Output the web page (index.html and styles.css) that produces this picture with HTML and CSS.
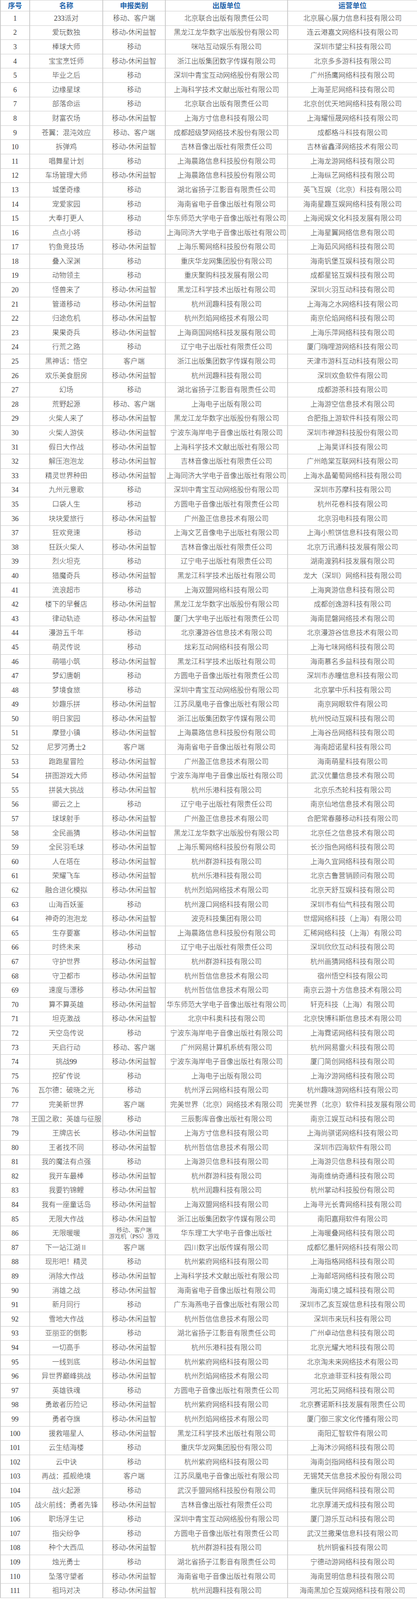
FILE: index.html
```html
<!DOCTYPE html>
<html lang="zh-CN">
<head>
<meta charset="utf-8">
<title>游戏审批名单</title>
<link rel="stylesheet" href="styles.css">
</head>
<body>
<table class="list">
<colgroup>
<col class="c-no"><col class="c-name"><col class="c-type"><col class="c-pub"><col class="c-op">
</colgroup>
<thead>
<tr><th>序号</th><th>名称</th><th>申报类别</th><th>出版单位</th><th>运营单位</th></tr>
</thead>
<tbody>
<tr><td>1</td><td>233派对</td><td>移动、客户端</td><td>北京联合出版有限责任公司</td><td>北京展心展力信息科技有限公司</td></tr>
<tr><td>2</td><td>爱玩数独</td><td>移动-休闲益智</td><td>黑龙江龙华数字出版股份有限公司</td><td>连云港嘉文网络科技有限公司</td></tr>
<tr><td>3</td><td>棒球大师</td><td>移动</td><td>咪咕互动娱乐有限公司</td><td>深圳市望尘科技有限公司</td></tr>
<tr><td>4</td><td>宝宝烹饪师</td><td>移动-休闲益智</td><td>浙江出版集团数字传媒有限公司</td><td>北京多多游科技有限公司</td></tr>
<tr><td>5</td><td>毕业之后</td><td>移动</td><td>深圳中青宝互动网络股份有限公司</td><td>广州扬鹰网络科技有限公司</td></tr>
<tr><td>6</td><td>边缘星球</td><td>移动</td><td>上海科学技术文献出版社有限公司</td><td>上海荃尼网络科技有限公司</td></tr>
<tr><td>7</td><td>部落命运</td><td>移动</td><td>北京联合出版有限责任公司</td><td>北京创优天地网络科技有限公司</td></tr>
<tr><td>8</td><td>财富农场</td><td>移动-休闲益智</td><td>上海方寸信息科技有限公司</td><td>上海耀恒晟网络科技有限公司</td></tr>
<tr><td>9</td><td>苍翼：混沌效应</td><td>移动、客户端</td><td>成都超级梦网络技术股份有限公司</td><td>成都格斗科技有限公司</td></tr>
<tr><td>10</td><td>拆弹鸡</td><td>移动-休闲益智</td><td>吉林音像出版社有限责任公司</td><td>吉林省鑫泽网络技术有限公司</td></tr>
<tr><td>11</td><td>唱舞星计划</td><td>移动</td><td>上海晨路信息科技股份有限公司</td><td>上海龙游网络科技有限公司</td></tr>
<tr><td>12</td><td>车场管理大师</td><td>移动-休闲益智</td><td>上海晨路信息科技股份有限公司</td><td>上海纵艺网络科技有限公司</td></tr>
<tr><td>13</td><td>城堡奇缘</td><td>移动</td><td>湖北省扬子江影音有限责任公司</td><td>英飞互娱（北京）科技有限公司</td></tr>
<tr><td>14</td><td>宠爱家园</td><td>移动</td><td>海南省电子音像出版社有限公司</td><td>海南星趣互娱网络科技有限公司</td></tr>
<tr><td>15</td><td>大奉打更人</td><td>移动</td><td>华东师范大学电子音像出版社有限公司</td><td>上海阅娱文化科技发展有限公司</td></tr>
<tr><td>16</td><td>点点小将</td><td>移动</td><td>上海同济大学电子音像出版社有限公司</td><td>上海星翼网络信息有限公司</td></tr>
<tr><td>17</td><td>钓鱼竞技场</td><td>移动-休闲益智</td><td>上海乐蜀网络科技股份有限公司</td><td>上海茹风网络科技有限公司</td></tr>
<tr><td>18</td><td>叠入深渊</td><td>移动</td><td>重庆华龙网集团股份有限公司</td><td>海南钒堡互娱科技有限公司</td></tr>
<tr><td>19</td><td>动物领主</td><td>移动</td><td>重庆聚购科技发展有限公司</td><td>成都星铭互娱科技有限公司</td></tr>
<tr><td>20</td><td>怪兽来了</td><td>移动-休闲益智</td><td>黑龙江科学技术出版社有限公司</td><td>深圳火羽互动科技有限公司</td></tr>
<tr><td>21</td><td>管道移动</td><td>移动-休闲益智</td><td>杭州润趣科技有限公司</td><td>上海海之水网络科技有限公司</td></tr>
<tr><td>22</td><td>归途危机</td><td>移动-休闲益智</td><td>杭州烈焰网络技术有限公司</td><td>南京伦焰网络科技有限公司</td></tr>
<tr><td>23</td><td>果果奇兵</td><td>移动-休闲益智</td><td>上海商国网络科技发展有限公司</td><td>上海乐萍网络科技有限公司</td></tr>
<tr><td>24</td><td>行荒之路</td><td>移动</td><td>辽宁电子出版社有限责任公司</td><td>厦门嗨哩游网络科技有限公司</td></tr>
<tr><td>25</td><td>黑神话：悟空</td><td>客户端</td><td>浙江出版集团数字传媒有限公司</td><td>天津市游科互动科技有限公司</td></tr>
<tr><td>26</td><td>欢乐美食厨房</td><td>移动-休闲益智</td><td>杭州润趣科技有限公司</td><td>深圳欢鱼软件有限公司</td></tr>
<tr><td>27</td><td>幻场</td><td>移动</td><td>湖北省扬子江影音有限责任公司</td><td>成都游茶科技有限公司</td></tr>
<tr><td>28</td><td>荒野起源</td><td>移动、客户端</td><td>上海电子出版有限公司</td><td>上海游空信息技术有限公司</td></tr>
<tr><td>29</td><td>火柴人来了</td><td>移动-休闲益智</td><td>黑龙江龙华数字出版股份有限公司</td><td>合肥指上游软件科技有限公司</td></tr>
<tr><td>30</td><td>火柴人游侠</td><td>移动-休闲益智</td><td>宁波东海岸电子音像出版社有限公司</td><td>深圳市禅游科技股份有限公司</td></tr>
<tr><td>31</td><td>假日大作战</td><td>移动-休闲益智</td><td>上海科学技术文献出版社有限公司</td><td>上海昊详科技有限公司</td></tr>
<tr><td>32</td><td>解压泡泡龙</td><td>移动-休闲益智</td><td>吉林音像出版社有限责任公司</td><td>广州皓棠互联网科技有限公司</td></tr>
<tr><td>33</td><td>精灵世界种田</td><td>移动-休闲益智</td><td>上海同济大学电子音像出版社有限公司</td><td>上海水晶葡萄网络科技有限公司</td></tr>
<tr><td>34</td><td>九州元意歌</td><td>移动</td><td>深圳中青宝互动网络股份有限公司</td><td>深圳市苏摩科技有限公司</td></tr>
<tr><td>35</td><td>口袋人生</td><td>移动</td><td>方圆电子音像出版社有限责任公司</td><td>杭州花卷科技有限公司</td></tr>
<tr><td>36</td><td>块块爱旅行</td><td>移动-休闲益智</td><td>广州盈正信息技术有限公司</td><td>北京羽电科技有限公司</td></tr>
<tr><td>37</td><td>狂欢竞速</td><td>移动</td><td>上海文艺音像电子出版社有限公司</td><td>上海小煎饼信息科技有限公司</td></tr>
<tr><td>38</td><td>狂跃火柴人</td><td>移动-休闲益智</td><td>吉林音像出版社有限责任公司</td><td>北京万讯通科技发展有限公司</td></tr>
<tr><td>39</td><td>烈火坦克</td><td>移动</td><td>辽宁电子出版社有限责任公司</td><td>湖南渡鸦科技发展有限公司</td></tr>
<tr><td>40</td><td>猎魔奇兵</td><td>移动-休闲益智</td><td>黑龙江科学技术出版社有限公司</td><td>龙大（深圳）网络科技有限公司</td></tr>
<tr><td>41</td><td>流浪超市</td><td>移动</td><td>上海双盟网络科技有限公司</td><td>上海爽游信息科技有限公司</td></tr>
<tr><td>42</td><td>楼下的早餐店</td><td>移动-休闲益智</td><td>黑龙江龙华数字出版股份有限公司</td><td>成都创逸游科技有限公司</td></tr>
<tr><td>43</td><td>律动轨迹</td><td>移动-休闲益智</td><td>厦门大学电子出版社有限责任公司</td><td>海南昆磐网络技术有限公司</td></tr>
<tr><td>44</td><td>漫游五千年</td><td>移动</td><td>北京漫游谷信息技术有限公司</td><td>北京漫游谷信息技术有限公司</td></tr>
<tr><td>45</td><td>萌灵传说</td><td>移动</td><td>炫彩互动网络科技有限公司</td><td>上海七味网络科技有限公司</td></tr>
<tr><td>46</td><td>萌喵小筑</td><td>移动-休闲益智</td><td>黑龙江科学技术出版社有限公司</td><td>海南慕名多益科技有限公司</td></tr>
<tr><td>47</td><td>梦幻唐朝</td><td>移动</td><td>方圆电子音像出版社有限责任公司</td><td>深圳市赤瞳信息科技有限公司</td></tr>
<tr><td>48</td><td>梦境食旅</td><td>移动</td><td>深圳中青宝互动网络股份有限公司</td><td>北京掌中乐科技有限公司</td></tr>
<tr><td>49</td><td>妙趣乐拼</td><td>移动-休闲益智</td><td>江苏凤凰电子音像出版社有限公司</td><td>南京网眼软件有限公司</td></tr>
<tr><td>50</td><td>明日家园</td><td>移动-休闲益智</td><td>浙江出版集团数字传媒有限公司</td><td>杭州悦动互娱科技有限公司</td></tr>
<tr><td>51</td><td>摩登小镇</td><td>移动-休闲益智</td><td>上海晨路信息科技股份有限公司</td><td>上海谷岳网络科技有限公司</td></tr>
<tr><td>52</td><td>尼罗河勇士2</td><td>客户端</td><td>海南省电子音像出版社有限公司</td><td>海南超诺星科技有限公司</td></tr>
<tr><td>53</td><td>跑跑星冒险</td><td>移动-休闲益智</td><td>广州盈正信息技术有限公司</td><td>海南萌星科技有限公司</td></tr>
<tr><td>54</td><td>拼图游戏大师</td><td>移动-休闲益智</td><td>宁波东海岸电子音像出版社有限公司</td><td>武汉优量信息技术有限公司</td></tr>
<tr><td>55</td><td>拼装大挑战</td><td>移动-休闲益智</td><td>杭州乐港科技有限公司</td><td>北京乐杰轮科技有限公司</td></tr>
<tr><td>56</td><td>卿云之上</td><td>移动</td><td>辽宁电子出版社有限责任公司</td><td>南京仙地信息技术有限公司</td></tr>
<tr><td>57</td><td>球球射手</td><td>移动-休闲益智</td><td>广州盈正信息技术有限公司</td><td>合肥常春藤移动科技有限公司</td></tr>
<tr><td>58</td><td>全民画猜</td><td>移动-休闲益智</td><td>黑龙江龙华数字出版股份有限公司</td><td>北京任之信息技术有限公司</td></tr>
<tr><td>59</td><td>全民羽毛球</td><td>移动-休闲益智</td><td>上海乐蜀网络科技股份有限公司</td><td>长沙指色网络科技有限公司</td></tr>
<tr><td>60</td><td>人在塔在</td><td>移动-休闲益智</td><td>杭州群游科技有限公司</td><td>上海久宜网络科技有限公司</td></tr>
<tr><td>61</td><td>荣耀飞车</td><td>移动-休闲益智</td><td>杭州乐港科技有限公司</td><td>北京古鲁营销顾问有限公司</td></tr>
<tr><td>62</td><td>融合进化模拟</td><td>移动-休闲益智</td><td>杭州烈焰网络技术有限公司</td><td>北京天舒互娱科技有限公司</td></tr>
<tr><td>63</td><td>山海百妖鉴</td><td>移动</td><td>杭州渡口网络科技有限公司</td><td>深圳市有仙气科技有限公司</td></tr>
<tr><td>64</td><td>神奇的泡泡龙</td><td>移动-休闲益智</td><td>波克科技集团有限公司</td><td>世熠网络科技（上海）有限公司</td></tr>
<tr><td>65</td><td>生存要塞</td><td>移动-休闲益智</td><td>上海晨路信息科技股份有限公司</td><td>汇稀网络科技（上海）有限公司</td></tr>
<tr><td>66</td><td>时终未来</td><td>移动</td><td>辽宁电子出版社有限责任公司</td><td>深圳欣欣互动科技有限公司</td></tr>
<tr><td>67</td><td>守护世界</td><td>移动-休闲益智</td><td>杭州群游科技有限公司</td><td>杭州画猜网络科技有限公司</td></tr>
<tr><td>68</td><td>守卫都市</td><td>移动-休闲益智</td><td>杭州哲信信息技术有限公司</td><td>宿州悟空科技有限公司</td></tr>
<tr><td>69</td><td>速度与漂移</td><td>移动-休闲益智</td><td>杭州哲信信息技术有限公司</td><td>南京云游十方信息技术有限公司</td></tr>
<tr><td>70</td><td>算不算英雄</td><td>移动-休闲益智</td><td>华东师范大学电子音像出版社有限公司</td><td>轩克科技（上海）有限公司</td></tr>
<tr><td>71</td><td>坦克激战</td><td>移动-休闲益智</td><td>北京中科奥科技有限公司</td><td>北京快博科斯信息技术有限公司</td></tr>
<tr><td>72</td><td>天空岛传说</td><td>移动</td><td>宁波东海岸电子音像出版社有限公司</td><td>上海霓诺网络科技有限公司</td></tr>
<tr><td>73</td><td>天启行动</td><td>移动、客户端</td><td>广州网易计算机系统有限公司</td><td>杭州网易雷火科技有限公司</td></tr>
<tr><td>74</td><td>挑战99</td><td>移动-休闲益智</td><td>宁波东海岸电子音像出版社有限公司</td><td>厦门简创网络科技有限公司</td></tr>
<tr><td>75</td><td>挖矿传说</td><td>移动</td><td>上海电子出版有限公司</td><td>上海汐游网络科技有限公司</td></tr>
<tr><td>76</td><td>瓦尔德：破晓之光</td><td>移动</td><td>杭州浮云网络科技有限公司</td><td>杭州趣味游网络科技有限公司</td></tr>
<tr><td>77</td><td>完美新世界</td><td>客户端</td><td>完美世界（北京）网络技术有限公司</td><td>完美世界（北京）软件科技发展有限公司</td></tr>
<tr><td>78</td><td>王国之歌：英雄与征服</td><td>移动</td><td>三辰影库音像出版社有限公司</td><td>南京江娱互动科技有限公司</td></tr>
<tr><td>79</td><td>王牌店长</td><td>移动-休闲益智</td><td>上海方寸信息科技有限公司</td><td>上海尚骐诺网络科技有限公司</td></tr>
<tr><td>80</td><td>王者找不同</td><td>移动-休闲益智</td><td>杭州哲信信息技术有限公司</td><td>深圳市四海软件有限公司</td></tr>
<tr><td>81</td><td>我的魔法有点强</td><td>移动</td><td>上海游贝信息科技有限公司</td><td>上海游贝信息科技有限公司</td></tr>
<tr><td>82</td><td>我开车最棒</td><td>移动-休闲益智</td><td>杭州群游科技有限公司</td><td>海南维纳奇通科技有限公司</td></tr>
<tr><td>83</td><td>我要钓锦鲤</td><td>移动-休闲益智</td><td>杭州润趣科技有限公司</td><td>杭州掌动科技股份有限公司</td></tr>
<tr><td>84</td><td>我有一座童话岛</td><td>移动-休闲益智</td><td>上海双盟网络科技有限公司</td><td>上海寻光长青网络科技有限公司</td></tr>
<tr><td>85</td><td>无限大作战</td><td>移动-休闲益智</td><td>浙江出版集团数字传媒有限公司</td><td>南阳嘉翔软件有限公司</td></tr>
<tr><td>86</td><td>无限暖暖</td><td class="two-line">移动、客户端<br>游戏机（PS5）游戏</td><td>华东理工大学电子音像出版社</td><td>上海暖叠网络科技有限公司</td></tr>
<tr><td>87</td><td>下一站江湖Ⅱ</td><td>客户端</td><td>四川数字出版传媒有限公司</td><td>成都忆墨轩网络科技有限公司</td></tr>
<tr><td>88</td><td>现形吧！精灵</td><td>移动</td><td>杭州紫府网络科技有限公司</td><td>上海指格网络科技有限公司</td></tr>
<tr><td>89</td><td>消除大作战</td><td>移动-休闲益智</td><td>上海科学技术文献出版社有限公司</td><td>上海邮塔网络科技有限公司</td></tr>
<tr><td>90</td><td>消雄之战</td><td>移动-休闲益智</td><td>海南省电子音像出版社有限公司</td><td>海南幻境之城科技有限公司</td></tr>
<tr><td>91</td><td>新月同行</td><td>移动</td><td>广东海燕电子音像出版社有限公司</td><td>深圳市乙亥互娱信息科技有限公司</td></tr>
<tr><td>92</td><td>雪地大作战</td><td>移动-休闲益智</td><td>杭州哲信信息技术有限公司</td><td>深圳市来玩科技有限公司</td></tr>
<tr><td>93</td><td>亚丽亚的倒影</td><td>移动</td><td>湖北省扬子江影音有限责任公司</td><td>广州卓动信息科技有限公司</td></tr>
<tr><td>94</td><td>一切高手</td><td>移动-休闲益智</td><td>杭州乐港科技有限公司</td><td>北京光耀大地科技有限公司</td></tr>
<tr><td>95</td><td>一线到底</td><td>移动-休闲益智</td><td>杭州紫府网络科技有限公司</td><td>北京淘未来网络技术有限公司</td></tr>
<tr><td>96</td><td>异世界巅峰挑战</td><td>移动-休闲益智</td><td>杭州烈焰网络技术有限公司</td><td>北京迪菲亚科技有限公司</td></tr>
<tr><td>97</td><td>英雄铁魂</td><td>移动</td><td>方圆电子音像出版社有限责任公司</td><td>河北拓艾网络科技有限公司</td></tr>
<tr><td>98</td><td>勇敢者历险记</td><td>移动-休闲益智</td><td>杭州紫府网络科技有限公司</td><td>北京赛诺斯科技发展有限责任公司</td></tr>
<tr><td>99</td><td>勇者夺旗</td><td>移动-休闲益智</td><td>杭州烈焰网络技术有限公司</td><td>厦门御三家文化传播有限公司</td></tr>
<tr><td>100</td><td>援救喵星人</td><td>移动-休闲益智</td><td>黑龙江科学技术出版社有限公司</td><td>南阳汇智软件有限公司</td></tr>
<tr><td>101</td><td>云生结海楼</td><td>移动</td><td>重庆华龙网集团股份有限公司</td><td>上海沐沙网络科技有限公司</td></tr>
<tr><td>102</td><td>云中诀</td><td>移动</td><td>杭州紫府网络科技有限公司</td><td>海南剑指网络科技有限公司</td></tr>
<tr><td>103</td><td>再战：孤舰绝境</td><td>客户端</td><td>江苏凤凰电子音像出版社有限公司</td><td>无锡梵天信息技术股份有限公司</td></tr>
<tr><td>104</td><td>战火起源</td><td>移动</td><td>武汉手盟网络科技股份有限公司</td><td>重庆玩伴网络科技有限公司</td></tr>
<tr><td>105</td><td>战火前线：勇者先锋</td><td>移动-休闲益智</td><td>吉林音像出版社有限责任公司</td><td>北京厚浦天成科技有限公司</td></tr>
<tr><td>106</td><td>职场浮生记</td><td>移动</td><td>深圳中青宝互动网络股份有限公司</td><td>厦门游乐互动科技有限公司</td></tr>
<tr><td>107</td><td>指尖纷争</td><td>移动</td><td>方圆电子音像出版社有限责任公司</td><td>武汉兰撒果信息科技有限公司</td></tr>
<tr><td>108</td><td>种个大西瓜</td><td>移动-休闲益智</td><td>杭州群游科技有限公司</td><td>杭州铜雀科技有限公司</td></tr>
<tr><td>109</td><td>烛光勇士</td><td>移动</td><td>湖北省扬子江影音有限责任公司</td><td>宁德动游网络科技有限公司</td></tr>
<tr><td>110</td><td>坠落守望者</td><td>移动-休闲益智</td><td>海南省电子音像出版社有限公司</td><td>海南昱明信息科技有限公司</td></tr>
<tr><td>111</td><td>祖玛对决</td><td>移动-休闲益智</td><td>杭州润趣科技有限公司</td><td>海南黑加仑互娱网络科技有限公司</td></tr>
</tbody>
</table>
</body>
</html>
```
FILE: styles.css
```css
html, body {
  margin: 0;
  padding: 0;
  background: #ffffff;
}

body {
  font-family: "Liberation Serif", "Noto Sans CJK SC", serif;
  font-size: 18px;
  color: #3a3a3a;
}

.list {
  width: 1067px;
  border-collapse: collapse;
  table-layout: fixed;
}

.c-no { width: 75px; }
.c-name { width: 187px; }
.c-type { width: 160px; }
.c-pub { width: 313px; }
.c-op { width: 332px; }

.list th,
.list td {
  border-style: solid;
  border-color: #c8c8c8;
  border-width: 1px 2px;
  padding: 0 2px;
  text-align: center;
  vertical-align: middle;
  line-height: 20px;
  white-space: nowrap;
  overflow: hidden;
}

.list thead tr {
  height: 28px;
}

.list th {
  color: #1f63ab;
  font-weight: 700;
}

.list td {
  font-weight: 300;
}

.list td.two-line {
  font-size: 15px;
  line-height: 16px;
}

.list tbody tr {
  height: 36.6px;
}
```
